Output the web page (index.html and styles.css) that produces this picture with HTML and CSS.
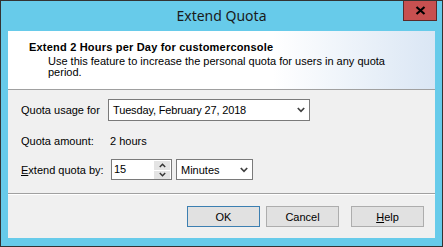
FILE: index.html
```html
<!DOCTYPE html>
<html>
<head>
<meta charset="utf-8">
<link rel="stylesheet" href="styles.css">
</head>
<body>
<div class="window">
  <div class="titlebar">
    <span class="tb-spacer"></span>
    <span class="title">Extend Quota</span>
    <div class="tb-right">
      <div class="close">
        <svg width="11" height="9" viewBox="0 0 11 9"><path d="M1.5 1 L9.5 8 M9.5 1 L1.5 8" stroke="#000" stroke-width="2.2" fill="none"/></svg>
      </div>
    </div>
  </div>
  <div class="client">
    <div class="header">
      <div class="h-title">Extend 2 Hours per Day for customerconsole</div>
      <div class="h-desc">Use this feature to increase the personal quota for users in any quota period.</div>
    </div>
    <div class="form">
      <div class="row r1">
        <span class="lbl">Quota usage for</span>
        <div class="combo date">
          <span class="combo-text">Tuesday, February 27, 2018</span>
          <svg class="chev" width="8" height="6" viewBox="0 0 8 6"><path d="M0.8 1 L4 4.3 L7.2 1" stroke="#404040" stroke-width="1.7" fill="none"/></svg>
        </div>
      </div>
      <div class="row r2">
        <span class="lbl">Quota amount:</span>
        <span class="val">2 hours</span>
      </div>
      <div class="row r3">
        <span class="lbl"><u>E</u>xtend quota by:</span>
        <div class="spin">
          <span class="spin-text">15</span>
          <div class="spin-btns">
            <div class="sb"><svg width="7" height="5" viewBox="0 0 7 5"><path d="M0.8 4 L3.5 1.2 L6.2 4" stroke="#333" stroke-width="1.4" fill="none"/></svg></div>
            <div class="sb"><svg width="7" height="5" viewBox="0 0 7 5"><path d="M0.8 1 L3.5 3.8 L6.2 1" stroke="#333" stroke-width="1.4" fill="none"/></svg></div>
          </div>
        </div>
        <div class="combo unit">
          <span class="combo-text">Minutes</span>
          <svg class="chev" width="8" height="6" viewBox="0 0 8 6"><path d="M0.8 1 L4 4.3 L7.2 1" stroke="#404040" stroke-width="1.7" fill="none"/></svg>
        </div>
      </div>
    </div>
    <div class="footer">
      <div class="btn default">OK</div>
      <div class="btn">Cancel</div>
      <div class="btn help"><u>H</u>elp</div>
    </div>
  </div>
</div>
</body>
</html>
```
FILE: styles.css
```css
* { box-sizing: border-box; }
html, body { margin: 0; padding: 0; }
body { width: 443px; height: 247px; overflow: hidden; background: #fff; }

.window {
  width: 443px;
  height: 247px;
  border: 1px solid #333;
  background: #67cbea;
  display: flex;
  flex-direction: column;
}

.titlebar {
  height: 30px;
  display: grid;
  grid-template-columns: 1fr auto 1fr;
  align-items: start;
}
.title {
  font-family: "Noto Sans", sans-serif;
  font-size: 14px;
  color: #1a1a1a;
  line-height: 20px;
  padding-top: 5px;
}
.tb-right { display: flex; justify-content: flex-end; padding-right: 5px; }
.close {
  width: 34px;
  height: 20px;
  background: #c75050;
  border: 1px solid #5a2a2a;
  border-top: none;
  display: flex;
  align-items: center;
  justify-content: center;
}

.client {
  flex: 1;
  margin: 0 7px 8px 7px;
  background: #f0f0f0;
  display: flex;
  flex-direction: column;
  font-family: "Liberation Sans", Arial, sans-serif;
  font-size: 11px;
  color: #000;
}

.header {
  height: 59px;
  border-bottom: 1px solid #a0a0a0;
  background: linear-gradient(to right, #ffffff 0%, #ffffff 62%, #dae6f4 100%);
  padding: 10px 0 0 21px;
}
.h-title {
  font-weight: bold;
  line-height: 13px;
  letter-spacing: 0.2px;
}
.h-desc {
  margin-top: 2px;
  padding-left: 19px;
  width: 360px;
  line-height: 11px;
}

.form {
  height: 104px;
  padding: 9px 0 0 13px;
  border-bottom: 1px solid #a0a0a0;
}
.row {
  display: flex;
  align-items: center;
}
.lbl { width: 87px; }
.r1 { height: 22px; }
.r2 { height: 21px; margin-top: 9px; }
.r2 .val { margin-left: 2px; }
.r3 { height: 21px; margin-top: 8px; }

.combo {
  height: 100%;
  border: 1px solid #7a7a7a;
  background: #fff;
  display: flex;
  align-items: center;
  justify-content: space-between;
  padding: 0 4px 0 4px;
}
.combo.date { width: 202px; }
.combo.date .combo-text { letter-spacing: -0.15px; }
.combo.unit { width: 77px; margin-left: 4px; padding-left: 4px; }
.combo-text { line-height: 14px; }

.spin {
  width: 61px;
  height: 100%;
  margin-left: 3px;
  border: 1px solid #7a7a7a;
  background: #fff;
  display: flex;
}
.spin-text { flex: 1; padding-left: 2px; line-height: 18px; }
.spin-btns {
  width: 18px;
  display: flex;
  flex-direction: column;
  gap: 1px;
  padding: 1px 1px 0 1px;
  background: #fff;
}
.sb {
  flex: 1;
  background: #e4e4e4;
  display: flex;
  align-items: center;
  justify-content: center;
}

.footer {
  flex: 1;
  border-top: 1px solid #fff;
  display: flex;
  justify-content: flex-end;
  padding: 11px 11px 0 0;
}
.btn {
  width: 73px;
  height: 21px;
  background: #e1e1e1;
  border: 1px solid #adadad;
  display: flex;
  align-items: center;
  justify-content: center;
  margin-left: 6px;
}
.btn.default { border-color: #3c7fb1; }
.btn.help { margin-left: 12px; }
```
